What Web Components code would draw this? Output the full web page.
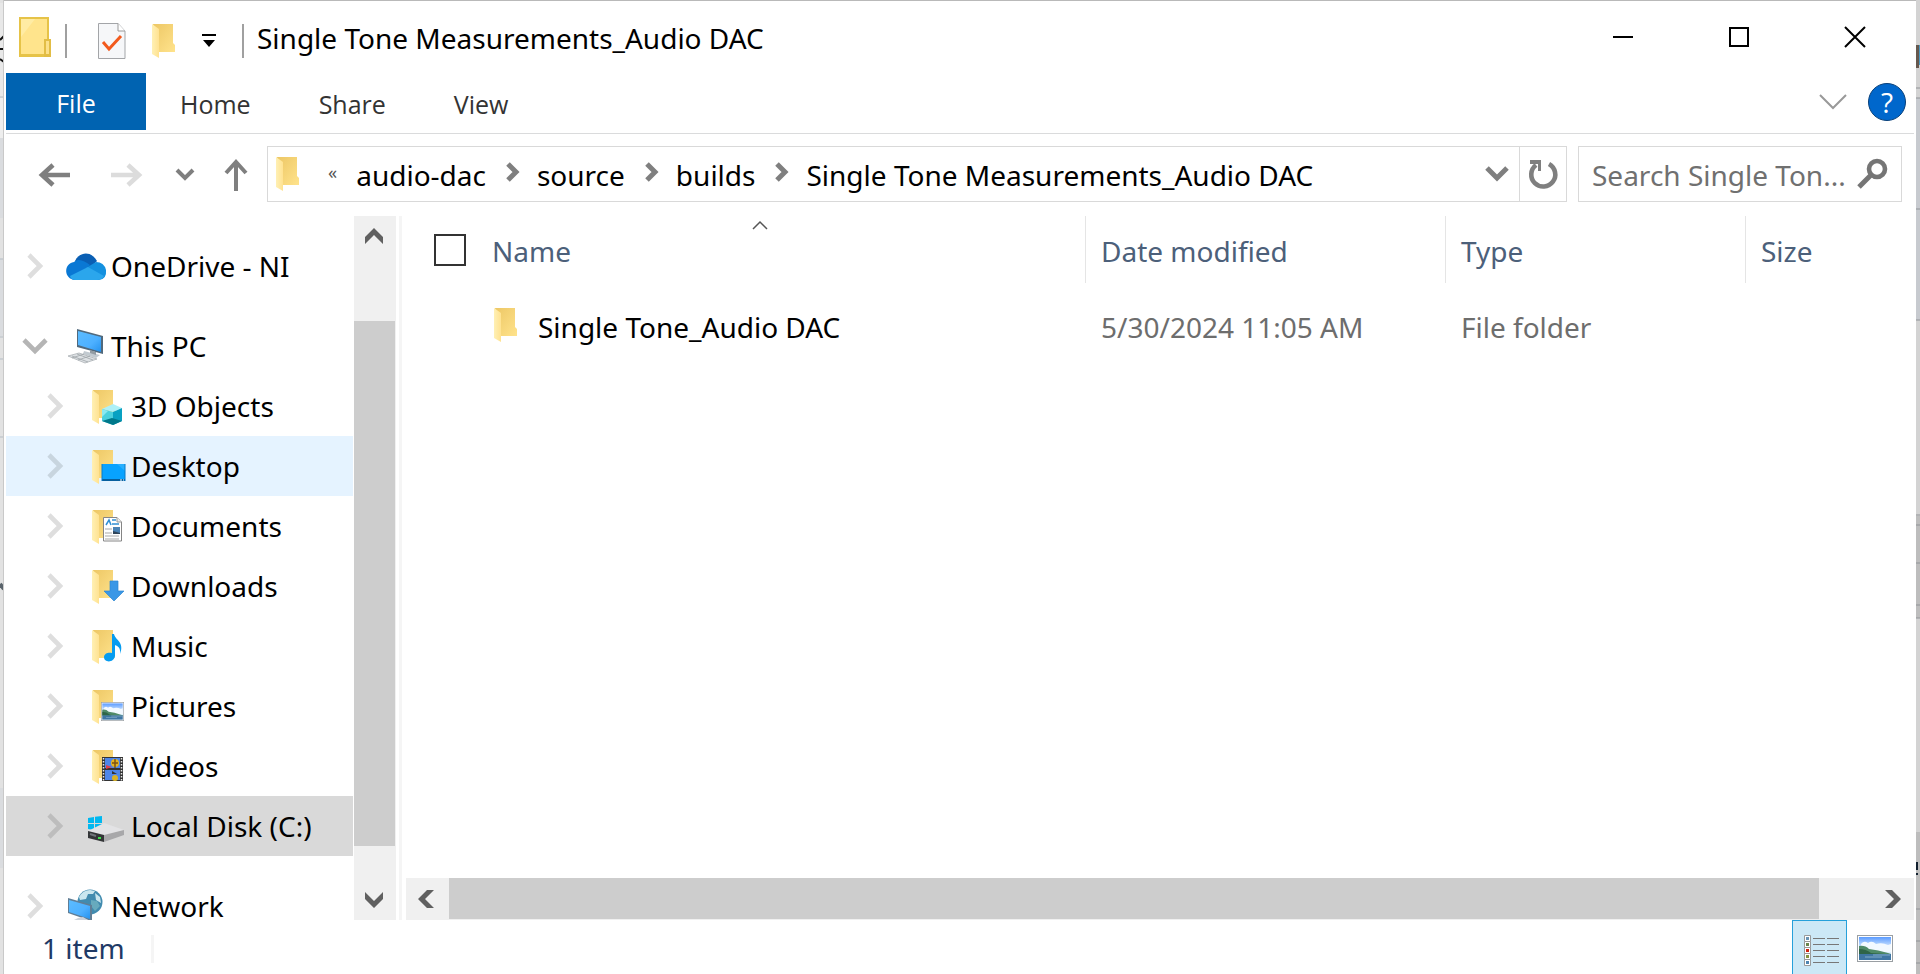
<!DOCTYPE html>
<html lang="en">
<head>
<meta charset="utf-8">
<title>Single Tone Measurements_Audio DAC</title>
<style>
html,body{margin:0;height:100%;overflow:hidden;background:#dcdcdc}
body{font-family:"Noto Sans","Open Sans",sans-serif;font-size:28px;line-height:40px;color:#000}
</style>
</head>
<body>
<explorer-window></explorer-window>
<script>
const folder = (x, y) => `<g transform="translate(${x} ${y})"><path d="M1 0H21V19L23 21V28H6Z" fill="url(#fb)"/><path d="M0 0L7 5V34L0 30Z" fill="url(#ff)"/></g>`;
const folderDefs = `<defs><linearGradient id="fb" x1="0" x2="1" y1="0" y2="1"><stop offset="0" stop-color="#edc765"/><stop offset="1" stop-color="#ffe38c"/></linearGradient><linearGradient id="ff" x1="0" x2="1"><stop offset="0" stop-color="#fff0b4"/><stop offset="1" stop-color="#ffe291"/></linearGradient><linearGradient id="sky" x1="0" x2="0" y1="0" y2="1"><stop offset="0" stop-color="#5b9bff"/><stop offset=".5" stop-color="#e3f3ff"/><stop offset="1" stop-color="#cfe6fa"/></linearGradient><linearGradient id="scr" x1="0" x2="1" y1="0" y2="1"><stop offset="0" stop-color="#5cbcff"/><stop offset=".6" stop-color="#4db0ff"/><stop offset="1" stop-color="#2592ee"/></linearGradient></defs>`;
const landscape = (x, y, w, h) => `<svg x="${x}" y="${y}" width="${w}" height="${h}" viewBox="0 0 36 27" preserveAspectRatio="none"><rect x=".5" y=".5" width="35" height="26" fill="#fff" stroke="#9a9fa3"/><rect x="2" y="2" width="32" height="23" fill="url(#sky)"/><path d="M4 9Q7 5 11 8Q15 5 19 9Q25 7 31 10L34 9V17H4Z" fill="#f2f9ff"/><path d="M2 11Q8 10 12 14Q21 15 31 18L34 19V20H2Z" fill="#4f8a68"/><path d="M2 14Q9 14 14 18L28 19H2Z" fill="#2f6548"/><path d="M2 19H34V25H2Z" fill="#3f76a3"/><path d="M16 20H33M8 22H25" stroke="#82abc9"/></svg>`;
const ICONS = {
  folder: [24, 34, folder(0, 0)],
  windowFolder: [32, 40, `<path d="M0 0H30V40H0Z" fill="#e6c348"/><path d="M2 2H28V37H2Z" fill="#ffe48c"/><path d="M2 2H16L2 20Z" fill="#ffeca4"/><path d="M25 22H32V40H25Z" fill="#e2bd45"/><path d="M27 24H30V37H27Z" fill="#fbe08a"/>`],
  check: [28, 36, `<path d="M.5.5H20L27 8V35.5H.5Z" fill="#f6f7f9" stroke="#a3a5a8"/><path d="M20 .5V8H27" fill="#fff" stroke="#999"/><path d="M5 19L11 26L23 13" fill="none" stroke="#f25a1d" stroke-width="3"/>`],
  custom: [14, 14, `<path d="M0 0H14V2H0ZM1 6H13L7 13Z"/>`],
  min: [20, 20, `<path d="M0 9H20V11H0Z"/>`],
  max: [20, 20, `<path d="M1 1H19V19H1Z" fill="none" stroke="#000" stroke-width="2"/>`],
  close: [20, 20, `<path d="M0 0L20 20M20 0L0 20" stroke="#000" stroke-width="2"/>`],
  ribbon: [28, 16, `<path d="M1 1L14 14L27 1" fill="none" stroke="#999" stroke-width="2"/>`],
  back: [31, 24, `<path d="M31 12H4M14 2L3 12L14 22" fill="none" stroke="#7f7f7f" stroke-width="4.6"/>`],
  forward: [31, 24, `<path d="M0 12H27M17 2L28 12L17 22" fill="none" stroke="#dcdcdc" stroke-width="4.6"/>`],
  recent: [20, 14, `<path d="M2 2L10 10L18 2" fill="none" stroke="#7f7f7f" stroke-width="4"/>`],
  up: [24, 32, `<path d="M12 32V4M2 14L12 3L22 14" fill="none" stroke="#7f7f7f" stroke-width="4"/>`],
  crumb: [14, 20, `<path d="M2 2L10 10L2 18" fill="none" stroke="#7f7f7f" stroke-width="5"/>`],
  drop: [24, 18, `<path d="M2 3L12 13L22 3" fill="none" stroke="#7f7f7f" stroke-width="5"/>`],
  refresh: [30, 30, `<path d="M21 5A12 12 0 1 1 8 6" fill="none" stroke="#7f7f7f" stroke-width="4.6"/><path d="M2 1H13V12H10V5H2Z" fill="#7f7f7f"/>`],
  search: [30, 30, `<circle cx="20" cy="10" r="8" fill="none" stroke="#757575" stroke-width="4.6"/><path d="M14 16L2 28" stroke="#757575" stroke-width="5"/>`],
  right: [24, 24, `<path d="M5 1L16 12L5 23" fill="none" stroke="currentColor" stroke-width="4.6"/>`],
  down: [24, 24, `<path d="M0 6L11 17L22 6" fill="none" stroke="#b5b5b5" stroke-width="4.6"/>`],
  sUp: [18, 16, `<path d="M9 0L18 9V16L9 7L0 16V9Z" fill="#606060"/>`],
  sDown: [18, 16, `<path d="M9 16L18 7V0L9 9L0 0V7Z" fill="#606060"/>`],
  sLeft: [16, 18, `<path d="M0 9L9 0H16L7 9L16 18H9Z" fill="#606060"/>`],
  sRight: [16, 18, `<path d="M16 9L7 0H0L9 9L0 18H7Z" fill="#606060"/>`],
  sort: [16, 8, `<path d="M1 8L8 1L15 8" fill="none" stroke="#555" stroke-width="1.5"/>`],
  onedrive: [40, 40, `<path d="M9 15C13 6 25 4 31 15L22 24Z" fill="#0a5fb4"/><path d="M9 34C-2 33-3 18 8 16C13 12 18 15 24 19L10 34Z" fill="#0a78d4"/><path d="M30 34L20 22L30 16Q38 16 40 24Q41 33 33 34Z" fill="#1490df"/><path d="M4 30L22 21L38 30Q36 34 31 34H9Q5 34 4 30Z" fill="#2ba6ec"/>`],
  pc: [40, 40, `<path d="M11 3L37 10V28L11 21Z" fill="#51697c"/><path d="M12 5L35 11V26L12 19Z" fill="url(#scr)"/><path d="M18 25L34 29L30 32L17 28Z" fill="#c2cad0"/><path d="M24 24L30 26V29L24 27Z" fill="#939ca3"/><path d="M2 30L13 27L31 33L19 37Z" fill="#dde1e4" stroke="#a3a9ae" stroke-width=".7"/><path d="M6 30L22 36M11 28L27 34M6 32L18 28M12 34L24 30" stroke="#a0a6aa" stroke-width=".8"/>`],
  objects: [40, 40, folder(6, 4) + `<path d="M16 23L27 18L36 22L27 26Z" fill="#aef0f7"/><path d="M16 23L27 26V39L16 35Z" fill="#4bd0dd"/><path d="M27 26L36 22V35L27 39Z" fill="#09a1c2"/><path d="M16 35L26 32L36 35L27 39Z" fill="#00788a"/><path d="M16 23L22 25L16 31Z" fill="#8ae9f2"/>`],
  desktop: [40, 40, folder(6, 4) + `<path d="M16 18H39V35H16Z" fill="#08a2ff"/><path d="M31 18H39V25Z" fill="#27afff"/><path d="M16 33H39V35H16Z" fill="#075f9e"/><path d="M16 18V35M39 18V35" stroke="#087bc7"/><path d="M34 34H36M37 34H38" stroke="#fff"/>`],
  documents: [40, 40, folder(6, 4) + `<path d="M17.500 11.500H31L35.500 16V35H17.500Z" fill="#fff" stroke="#858585"/><path d="M31 11.500V16H35.500" fill="#eee" stroke="#999"/><path d="M20 19L23 14L25 19M26 14H30M26 18H33" fill="none" stroke="#318fd4" stroke-width="1.500"/><path d="M19 23H26M19 27H26M19 30H33M19 33H33" stroke="#aaa" stroke-width="1.200"/><path d="M27 21H34V28H27Z" fill="#4b83b5"/><path d="M27 25L34 27V28H27Z" fill="#30455a"/>`],
  downloads: [40, 40, folder(6, 4) + `<path d="M24 15H32V25H38L28 35L18 25H24Z" fill="#3a97e6" stroke="#2e86d0" stroke-width=".7"/>`],
  music: [40, 40, folder(6, 4) + `<path d="M26 8H28C29 14 39 16 34 28C35 21 31 20 29 19V30C28 37 18 37 18 31C18 27 23 26 26 27Z" fill="#069cf0"/>`],
  pictures: [40, 40, folder(6, 4) + landscape(15, 16, 23, 19)],
  videos: [40, 40, folder(6, 4) + `<path d="M16 11H37V35H16Z" fill="#333"/><path d="M19 12H34V22H19ZM19 24H34V34H19Z" fill="#4e86e8"/><path d="M17.500 12V35M35.500 12V35" stroke="#e8e8e8" stroke-width="1.500" stroke-dasharray="1.500 1.500"/><circle cx="29" cy="17" r="4" fill="#e5b320"/><path d="M29 13V22M26 17H32" stroke="#7b5314" stroke-width="1.500"/><path d="M20 19L26 21L20 23Z" fill="#df3e4b"/><path d="M26 25L31 28H26Z" fill="#333"/><circle cx="29" cy="32" r="3" fill="#dab223"/>`],
  disk: [40, 40, `<path d="M2 12L8 11V17H2ZM9 10.800L16 10V17H9ZM2 18H8V24L2 23ZM9 18H16V25L9 24Z" fill="#00b8f0"/><path d="M2 25L18 17L38 24L18 30Z" fill="#e3e3e5"/><path d="M2 25L18 29V36L2 32Z" fill="#333537"/><path d="M18 29L38 24V29L18 36Z" fill="#a8a8aa"/><path d="M12 31H15V33H12Z" fill="#3de04b"/><path d="M4 28L10 30" stroke="#70757a" stroke-width="2"/>`],
  network: [40, 40, `<circle cx="24" cy="16" r="12.500" fill="#418baf"/><path d="M13 11Q17 4 24 4L29 5L27 8L22 8L20 13L14 14ZM29 7L34 11L35 17L30 14Z" fill="#c9e6ef"/><path d="M25 14L31 15L34 20L29 25L25 20Z" fill="#67aabd"/><path d="M2 12L26 19V34H22L2 27Z" fill="#607e96"/><path d="M3 14L24 20V33L3 26Z" fill="url(#scr)"/><path d="M12 32L17 31L22 34H8Z" fill="#ccd2da"/>`],
  details: [36, 32, [0, 6, 12, 18, 24].map((y, i) => `<path d="M.5 ${y + .5}H6.500V${y + 6.500}H.5Z" fill="#fff" stroke="#999"/><path d="M2 ${y + 2}H5V${y + 5}H2Z" fill="${['#6894b5', '#6b854c', '#cf2410', '#84933f', '#4e85b2'][i]}"/><path d="M9 ${y + 3.500}H21M23 ${y + 3.500}H35" stroke="#777"/>`).join('')],
  thumbs: [36, 27, landscape(0, 0, 36, 27)]
};

class BaseElement extends HTMLElement {
  constructor() { super(); this.attachShadow({ mode: 'open' }); }
  connectedCallback() {
    const t = document.createElement('template');
    t.innerHTML = `<style>*{box-sizing:border-box}button,input{font:inherit;color:inherit;background:none;border:0;margin:0;padding:0;border-radius:0}button{display:flex;align-items:center;justify-content:center}${this.css()}</style>${this.html()}`;
    this.shadowRoot.replaceChildren(t.content.cloneNode(true));
  }
}
const define = (name, css, html) => customElements.define(name, class extends BaseElement {
  css() { return css; }
  html() { return typeof html === 'function' ? html(this) : html; }
});

define('ui-icon', `:host{display:block;flex:none}svg{display:block;overflow:visible}`, el => {
  const [w, h, body] = ICONS[el.getAttribute('name')];
  return `<svg width="${w}" height="${h}" viewBox="0 0 ${w} ${h}" aria-hidden="true">${folderDefs}${body}</svg>`;
});

define('title-bar', `
:host{display:flex;height:72px;align-items:flex-start;padding-right:1px}
.quick{display:flex;align-items:center;height:72px;padding-left:13px}
.sep{width:2px;height:34px;background:#a0a0a0;margin-top:7px}
.sep.one{margin-left:14px}
button{flex:none}
.b1{margin:7px 26px 0 31px}.b2{margin:7px 22px 0 0}.b3{width:22px;height:40px;margin:7px 22px 0 0}
h1{font:inherit;margin:0 0 0 13px;padding-top:17px;flex:1;white-space:nowrap}
.ctl{width:116px;height:72px;padding-bottom:1px}`, `
<div class="quick"><ui-icon name="windowFolder"></ui-icon><span class="sep one"></span>
<button class="b1" aria-label="Properties"><ui-icon name="check"></ui-icon></button>
<button class="b2" aria-label="New folder"><ui-icon name="folder"></ui-icon></button>
<button class="b3" aria-label="Customize toolbar"><ui-icon name="custom"></ui-icon></button><span class="sep two"></span></div>
<h1>Single Tone Measurements_Audio DAC</h1>
<button class="ctl" aria-label="Minimize"><ui-icon name="min"></ui-icon></button>
<button class="ctl" aria-label="Maximize"><ui-icon name="max"></ui-icon></button>
<button class="ctl" aria-label="Close"><ui-icon name="close"></ui-icon></button>`);

define('ribbon-tabs', `
:host{display:flex;height:61px;border-bottom:1px solid #dadbdc;align-items:flex-start;color:#333;font-family:"Open Sans","Noto Sans",sans-serif;font-size:25px}
button{height:57px;padding:4px 34px 0}
.file{background:#0063b1;color:#fff;width:140px;padding:2px 0 0}
.help{width:38px;height:38px;padding:0;margin:10px 8px 0 21px;border-radius:50%;background:#0067cc;border:1px solid #08407a;color:#fff;font-size:28px;line-height:36px}
.fold{padding:0;margin-left:auto;height:57px}`, `
<button class="file">File</button><button>Home</button><button>Share</button><button>View</button>
<button class="fold" aria-label="Expand the ribbon"><ui-icon name="ribbon"></ui-icon></button><button class="help" aria-label="Help">?</button>`);

define('address-bar', `
:host{display:flex;height:82px;padding:12px 12px 14px 12px}
.nav,.recent,.up{padding-top:2px}
.nav{width:72px}.recent{width:46px}.up{width:59px;padding-right:3px}
.path{flex:1;display:flex;align-items:center;border:1px solid #d9d9d9;padding-left:8px;min-width:0}
.more{font-size:18px;color:#555;margin:0 19px 0 28px;line-height:36px;padding-bottom:4px}
.crumb{white-space:nowrap;padding-top:2px}.path ui-icon[name=crumb]{margin:0 17px 4px 20px}
.drop{margin-left:auto;width:44px;height:54px}
.refresh{width:47px;height:54px;border-left:1px solid #d9d9d9}
.search{width:324px;margin-left:11px;border:1px solid #d9d9d9;display:flex;align-items:center;padding:0 14px 0 13px}
input{flex:1;min-width:0;width:0;outline:0;height:50px;padding-top:2px}
input::placeholder{color:#707070;opacity:1}`, `
<button class="nav" aria-label="Back"><ui-icon name="back"></ui-icon></button>
<button class="nav" aria-label="Forward"><ui-icon name="forward"></ui-icon></button>
<button class="recent" aria-label="Recent locations"><ui-icon name="recent"></ui-icon></button>
<button class="up" aria-label="Up"><ui-icon name="up"></ui-icon></button>
<div class="path"><ui-icon name="folder"></ui-icon><button class="more">«</button>
<button class="crumb">audio-dac</button><ui-icon name="crumb"></ui-icon>
<button class="crumb">source</button><ui-icon name="crumb"></ui-icon>
<button class="crumb">builds</button><ui-icon name="crumb"></ui-icon>
<button class="crumb">Single Tone Measurements_Audio DAC</button>
<button class="drop" aria-label="Previous locations"><ui-icon name="drop"></ui-icon></button>
<button class="refresh" aria-label="Refresh"><ui-icon name="refresh"></ui-icon></button></div>
<div class="search"><input type="text" aria-label="Search" placeholder="Search Single Ton..."><ui-icon name="search"></ui-icon></div>`);

define('tree-item', `
:host{display:block;flex:none}
:host([gap]){margin-top:20px}
button{width:100%;height:60px;justify-content:flex-start;padding-left:18px;white-space:nowrap}
:host([child]) button{padding-left:38px}
:host([hover]) button{background:#e5f3ff}
:host([selected]) button{background:#d9d9d9}
.arrow{color:#dedede;margin-right:18px}
:host([hover]) .arrow{color:#c8d5df}:host([selected]) .arrow{color:#bdbdbd}
.label{padding-left:5px}`, el => `
<button><ui-icon class="arrow" name="${el.hasAttribute('open') ? 'down' : 'right'}"></ui-icon><ui-icon name="${el.getAttribute('icon')}"></ui-icon><span class="label"><slot></slot></span></button>`);

define('scroll-bar', `
:host{display:flex;background:#f0f0f0;flex:none}
:host([vertical]){flex-direction:column;width:42px;padding-right:1px}
:host([horizontal]){height:42px;padding-bottom:1px}
button{width:41px;height:41px;flex:none}
:host([vertical]) button{padding-right:2px}
:host([vertical]) button:first-of-type{height:40px}
:host([horizontal]) button{width:43px;padding-right:3px}
:host([horizontal]) button:last-of-type{padding:0}
.track{flex:1;display:flex}
:host([vertical]) .track{flex-direction:column}
.before{flex:var(--before) 1 0}.thumb{flex:var(--thumb) 1 0;background:#cdcdcd}.after{flex:var(--after) 1 0}`, el => {
  const v = el.hasAttribute('vertical');
  return `<button aria-label="${v ? 'Scroll up' : 'Scroll left'}"><ui-icon name="${v ? 'sUp' : 'sLeft'}"></ui-icon></button><div class="track"><div class="before"></div><div class="thumb"></div><div class="after"></div></div><button aria-label="${v ? 'Scroll down' : 'Scroll right'}"><ui-icon name="${v ? 'sDown' : 'sRight'}"></ui-icon></button>`;
});

define('nav-pane', `
:host{display:flex;min-height:0}
nav{width:347px;min-height:0;display:flex;flex-direction:column;margin-right:1px}
scroll-bar{--before:65;--thumb:525;--after:33}`, `
<nav aria-label="Folders"><tree-item gap icon="onedrive">OneDrive - NI</tree-item>
<tree-item gap open icon="pc">This PC</tree-item>
<tree-item child icon="objects">3D Objects</tree-item>
<tree-item child hover icon="desktop">Desktop</tree-item>
<tree-item child icon="documents">Documents</tree-item>
<tree-item child icon="downloads">Downloads</tree-item>
<tree-item child icon="music">Music</tree-item>
<tree-item child icon="pictures">Pictures</tree-item>
<tree-item child icon="videos">Videos</tree-item>
<tree-item child selected icon="disk">Local Disk (C:)</tree-item>
<tree-item gap icon="network">Network</tree-item></nav>
<scroll-bar vertical></scroll-bar>`);

define('file-list', `
:host{display:flex;flex-direction:column;min-width:0;min-height:0;margin-left:3px;border-left:3px solid #f5f5f5;padding-left:4px}
.view{flex:1;min-height:0;overflow:hidden}
table{width:100%;border-collapse:separate;border-spacing:0;table-layout:fixed}
th,td{font-weight:400;text-align:left;padding:0 0 0 15px;white-space:nowrap}
th{height:67px;color:#4c607a;border-left:1px solid #e5e5e5;padding-top:2px;position:relative}
th:first-child,th:nth-child(2){border:0}
td{height:60px;color:#6d6d6d}
tbody::before{content:"";display:block;height:14px}
td:nth-child(3),td:nth-child(4){padding-left:16px}
th:first-child,td:first-child{width:86px;padding:0 0 0 28px}
th:nth-child(2),td:nth-child(2){padding-left:0}
th.name{width:593px}th.date{width:360px}th.type{width:300px}
input{display:block;appearance:none;width:32px;height:32px;border:2px solid #333;background:#fff}
.sort{position:absolute;left:260px;top:5px}
.file{display:flex;align-items:center;color:#000;gap:20px;padding-left:2px}
.file ui-icon{margin-bottom:4px}
scroll-bar{--before:0;--thumb:1370;--after:52}`, `
<div class="view"><table><thead><tr><th><input type="checkbox" aria-label="Select all"></th><th class="name">Name<ui-icon class="sort" name="sort"></ui-icon></th><th class="date">Date modified</th><th class="type">Type</th><th>Size</th></tr></thead>
<tbody><tr><td></td><td><div class="file"><ui-icon name="folder"></ui-icon><span>Single Tone_Audio DAC</span></div></td><td>5/30/2024 11:05 AM</td><td>File folder</td><td></td></tr></tbody></table></div>
<scroll-bar horizontal></scroll-bar>`);

define('status-bar', `
:host{display:flex;height:54px;color:#1f3a66}
.count{padding:8px 0 0 36px;width:145px;white-space:nowrap}
.sep{width:3px;height:28px;background:#f5f5f5;margin-top:15px}
.details{margin-left:auto;width:55px;height:56px;background:#cce8f6;border:1px solid #26a0da;padding:5px 0 0 5px}
.thumbs{width:56px;height:56px;margin-right:11px}`, `
<span class="count">1 item</span><span class="sep"></span>
<button class="details" aria-label="Details view"><ui-icon name="details"></ui-icon></button>
<button class="thumbs" aria-label="Large thumbnails view"><ui-icon name="thumbs"></ui-icon></button>`);

define('desktop-edge', `:host{display:block;min-height:0;overflow:hidden}svg{display:block;width:100%;height:100%}`, el => el.getAttribute('side') === 'left'
  ? `<svg viewBox="0 0 4 974" preserveAspectRatio="none"><path d="M0 0H4V974H0Z" fill="#e2e2e2"/><path d="M0 3H4V97H0Z" fill="#e8e8e8"/><path d="M0 98H4V138H0Z" fill="#eee"/><path d="M0 138H4V218H0ZM0 259H4V336H0ZM0 788H4V868H0Z" fill="#dadcdf"/><path d="M0 97H4M0 259H4M0 337H4M0 359H4M0 437H4" stroke="#b5bdc5"/><path d="M0 40L4 36M0 49H4M0 59L4 62" stroke="#111" stroke-width="2"/><path d="M0 584L4 589" stroke="#59636b" stroke-width="4"/><path d="M3 499H4V501H3ZM3 515H4V517H3Z" fill="#555"/><path d="M3 0H4V974H3Z" fill="#c9c9c9"/></svg>`
  : `<svg viewBox="0 0 4 974" preserveAspectRatio="none"><path d="M0 0H4V974H0Z" fill="#d3d3d3"/><path d="M0 98H4V320H0Z" fill="#c7cacf"/><path d="M0 516H4V618H0ZM0 832H4V974H0Z" fill="#bdbdbd"/><path d="M0 88H4M0 98H4M0 209H4M0 320H4M0 515H4M0 525H4M0 563H4M0 605H4M0 618H4M0 909H4M0 941H4M0 963H4" stroke="#909397"/><path d="M0 45H3V68H0Z" fill="#66584e"/><path d="M3 45H4V65H3Z" fill="#4b98c0"/><path d="M0 862H2V870H0ZM0 873H2V875H0Z" fill="#12202f"/></svg>`);

define('explorer-window', `
:host{display:grid;grid-template-columns:4px minmax(0,1fr) 4px;grid-template-rows:minmax(0,1fr);height:100vh}
main{display:grid;grid-template-columns:minmax(0,1fr);grid-template-rows:auto auto auto minmax(0,1fr) auto;background:#fff;border-top:1px solid #b9b9b9;padding:0 2px;min-height:0;overflow:hidden}
.panes{display:grid;grid-template-columns:auto minmax(0,1fr);grid-template-rows:minmax(0,1fr);min-height:0}`, `
<desktop-edge side="left"></desktop-edge>
<main><title-bar></title-bar><ribbon-tabs></ribbon-tabs><address-bar></address-bar>
<div class="panes"><nav-pane></nav-pane><file-list></file-list></div><status-bar></status-bar></main>
<desktop-edge side="right"></desktop-edge>`);
</script>
</body>
</html>
